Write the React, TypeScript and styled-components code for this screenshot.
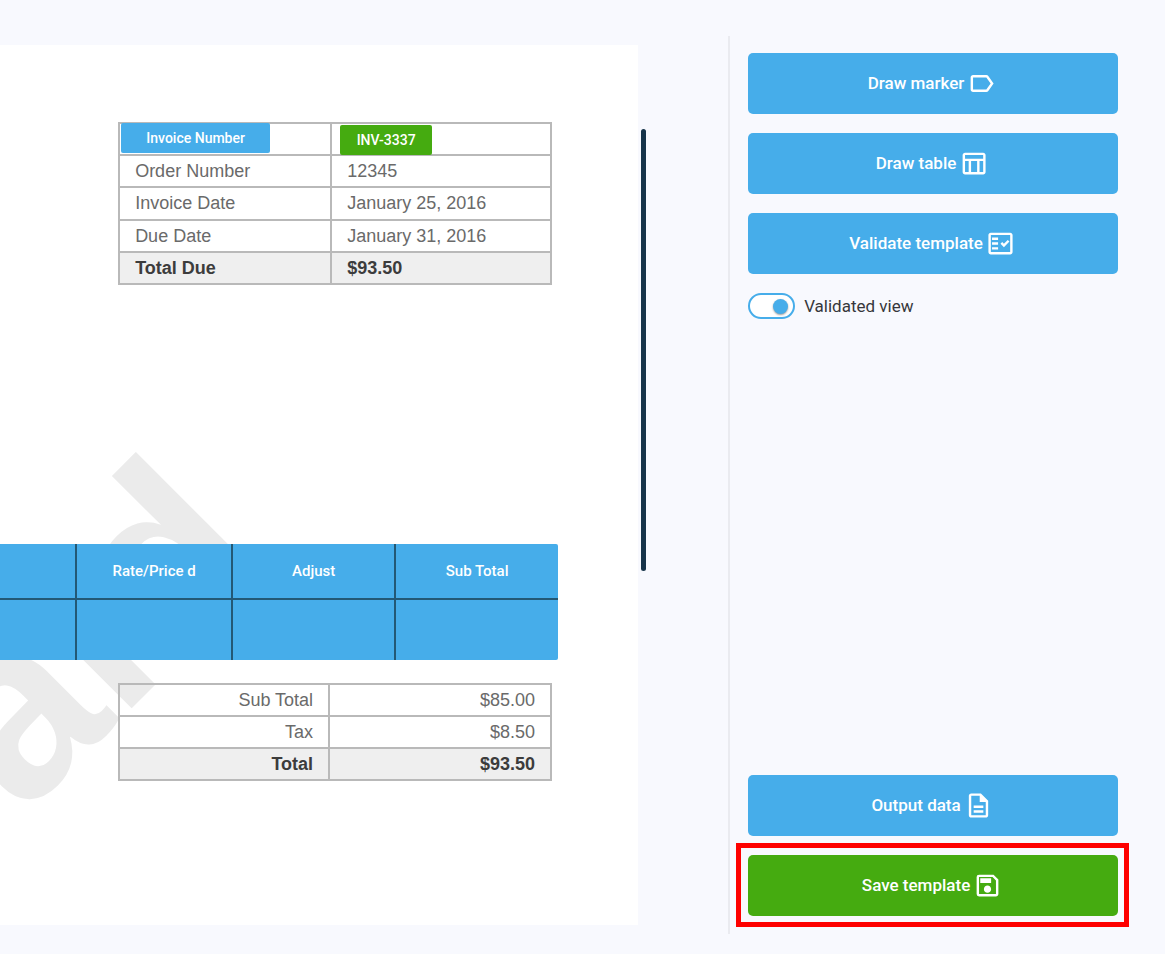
import React, { useState } from "react";
import styled, { createGlobalStyle, css } from "styled-components";
import {
  MdLabelOutline,
  MdOutlineTableChart,
  MdOutlineFactCheck,
  MdOutlineDescription,
  MdOutlineSave,
} from "react-icons/md";

const blue = "#46adea";
const green = "#45ab10";

const GlobalStyle = createGlobalStyle`
  *, *::before, *::after { box-sizing: border-box; }
  body {
    margin: 0;
    background: #f8f9fe;
    font-family: Roboto, "Liberation Sans", sans-serif;
  }
`;

const Workspace = styled.main`
  display: flex;
  min-height: 100vh;
  padding: 36px 0 20px;
`;

const Viewer = styled.section`
  display: flex;
  flex: 1;
  min-width: 0;
  padding: 9px 0;
`;

const Sheet = styled.article`
  position: relative;
  display: flex;
  flex: 1;
  flex-direction: column;
  align-items: flex-end;
  min-width: 0;
  padding: 77px 86px 60px 0;
  overflow: hidden;
  background: #fff;
`;

const Watermark = styled.svg`
  position: absolute;
  top: 0;
  right: 0;
  width: 638px;
  height: 880px;
  fill: #ebebeb;
  font: bold 246px "Liberation Sans", Arial, sans-serif;
`;

const ScrollTrack = styled.div`
  flex: none;
  width: 90px;
  padding: 84px 0 0 3px;
`;

const ScrollThumb = styled.div`
  width: 5px;
  height: 442px;
  border-radius: 3px;
  background: #17344a;
`;

const DocTable = styled.table<{ $align: "left" | "right" }>`
  position: relative;
  width: 434px;
  border-collapse: collapse;
  table-layout: fixed;
  color: #6a6a6a;
  font: 18px/20px "Liberation Sans", Arial, sans-serif;
  text-align: ${(p) => p.$align};

  th,
  td {
    position: relative;
    height: 32px;
    padding: 0 15px;
    border: 2px solid #b9b9b9;
    font-weight: inherit;
    text-align: inherit;
  }
`;

const InvoiceTable = styled(DocTable)`
  height: 163px;
`;

const LabelCol = styled.col<{ $width: number }>`
  width: ${(p) => p.$width}px;
`;

const TotalRow = styled.tr`
  background: #efefef;
  color: #3c3c3c;
  font-weight: bold;
`;

const Marker = styled.span<{ $kind: "label" | "value" }>`
  position: absolute;
  display: flex;
  align-items: center;
  justify-content: center;
  height: 30px;
  border-radius: 2px;
  color: #fff;
  font: 500 14px/20px Roboto, sans-serif;
  ${(p) =>
    p.$kind === "label"
      ? css`
          top: -1px;
          left: 1px;
          width: 149px;
          background: ${blue};
        `
      : css`
          top: 1px;
          left: 8px;
          width: 92px;
          background: ${green};
        `}
`;

const LineItems = styled.div`
  position: relative;
  align-self: stretch;
  margin: 259px -6px 23px 0;
  border-radius: 0 2px 2px 0;
  overflow: hidden;
`;

const LineTable = styled.table`
  width: 100%;
  border-collapse: collapse;
  table-layout: fixed;
  background: ${blue};
  color: #fff;
  font: 500 15px/20px Roboto, sans-serif;

  th,
  td {
    padding: 0;
    border: 0 solid #235875;
  }
  th {
    height: 55px;
    border-bottom-width: 2px;
    font-weight: 500;
  }
  td {
    height: 61px;
  }
  th + th,
  td + td {
    border-left-width: 2px;
  }
`;

const Sidebar = styled.aside`
  display: flex;
  flex: none;
  flex-direction: column;
  gap: 19px;
  width: 37.5%;
  padding: 17px 47px 18px 18px;
  border-left: 2px solid #eaebf0;
`;

const ActionButton = styled.button<{ $tone?: string }>`
  display: flex;
  align-items: center;
  justify-content: center;
  gap: 3px;
  width: 100%;
  height: 61px;
  padding: 0 18px 0 16px;
  border: 0;
  border-radius: 5px;
  background: ${(p) => p.$tone ?? blue};
  color: #fff;
  font: 500 17px/24px Roboto, sans-serif;
  cursor: pointer;

  svg {
    flex: none;
    width: 29px;
    height: 29px;
  }
`;

const ButtonText = styled.span`
  padding-bottom: 2px;
`;

const Toggle = styled.label`
  display: flex;
  align-items: center;
  gap: 9px;
  color: #36373b;
  font-size: 17px;
  line-height: 24px;
`;

const Switch = styled.input`
  display: flex;
  align-items: center;
  appearance: none;
  width: 47px;
  height: 26px;
  margin: 0;
  padding: 0 5px;
  border: 2px solid ${blue};
  border-radius: 13px;
  background: #fff;
  cursor: pointer;

  &::before {
    content: "";
    width: 15px;
    height: 15px;
    border-radius: 50%;
    background: ${blue};
    box-shadow: 0 1px 2px rgba(0, 0, 0, 0.4);
  }
  &:checked {
    justify-content: flex-end;
  }
`;

const BottomActions = styled.div`
  display: flex;
  flex-direction: column;
  gap: 19px;
  margin-top: auto;
`;

const Highlight = styled.div`
  position: relative;

  &::after {
    content: "";
    position: absolute;
    inset: -12px -11px -11px -12px;
    border: 5px solid #fe0000;
    pointer-events: none;
  }
`;

const details = [
  ["Order Number", "12345"],
  ["Invoice Date", "January 25, 2016"],
  ["Due Date", "January 31, 2016"],
];

const totals = [
  ["Sub Total", "$85.00"],
  ["Tax", "$8.50"],
];

export default function App() {
  const [validated, setValidated] = useState(true);

  return (
    <>
      <GlobalStyle />
      <Workspace>
        <Viewer>
          <Sheet>
            <Watermark viewBox="0 0 638 880" aria-hidden="true">
              <text textAnchor="end" transform="translate(274 521) rotate(-45)">
                Paid
              </text>
            </Watermark>

            <InvoiceTable $align="left">
              <colgroup>
                <LabelCol $width={212} />
                <col />
              </colgroup>
              <tbody>
                <tr>
                  <th scope="row">
                    <Marker $kind="label">Invoice Number</Marker>
                  </th>
                  <td>
                    <Marker $kind="value">INV-3337</Marker>
                  </td>
                </tr>
                {details.map(([name, value]) => (
                  <tr key={name}>
                    <th scope="row">{name}</th>
                    <td>{value}</td>
                  </tr>
                ))}
                <TotalRow>
                  <th scope="row">Total Due</th>
                  <td>$93.50</td>
                </TotalRow>
              </tbody>
            </InvoiceTable>

            <LineItems>
              <LineTable>
                <colgroup>
                  <col />
                  <LabelCol $width={156} />
                  <LabelCol $width={163} />
                  <LabelCol $width={163} />
                </colgroup>
                <thead>
                  <tr>
                    <th />
                    <th scope="col">Rate/Price d</th>
                    <th scope="col">Adjust</th>
                    <th scope="col">Sub Total</th>
                  </tr>
                </thead>
                <tbody>
                  <tr>
                    <td />
                    <td />
                    <td />
                    <td />
                  </tr>
                </tbody>
              </LineTable>
            </LineItems>

            <DocTable $align="right">
              <colgroup>
                <LabelCol $width={210} />
                <col />
              </colgroup>
              <tbody>
                {totals.map(([name, value]) => (
                  <tr key={name}>
                    <th scope="row">{name}</th>
                    <td>{value}</td>
                  </tr>
                ))}
                <TotalRow>
                  <th scope="row">Total</th>
                  <td>$93.50</td>
                </TotalRow>
              </tbody>
            </DocTable>
          </Sheet>
          <ScrollTrack>
            <ScrollThumb />
          </ScrollTrack>
        </Viewer>

        <Sidebar>
          <ActionButton type="button">
            <ButtonText>Draw marker</ButtonText>
            <MdLabelOutline />
          </ActionButton>
          <ActionButton type="button">
            <ButtonText>Draw table</ButtonText>
            <MdOutlineTableChart />
          </ActionButton>
          <ActionButton type="button">
            <ButtonText>Validate template</ButtonText>
            <MdOutlineFactCheck />
          </ActionButton>
          <Toggle>
            <Switch
              type="checkbox"
              role="switch"
              checked={validated}
              onChange={(e) => setValidated(e.target.checked)}
            />
            Validated view
          </Toggle>
          <BottomActions>
            <ActionButton type="button">
              <ButtonText>Output data</ButtonText>
              <MdOutlineDescription />
            </ActionButton>
            <Highlight>
              <ActionButton type="button" $tone={green}>
                <ButtonText>Save template</ButtonText>
                <MdOutlineSave />
              </ActionButton>
            </Highlight>
          </BottomActions>
        </Sidebar>
      </Workspace>
    </>
  );
}
